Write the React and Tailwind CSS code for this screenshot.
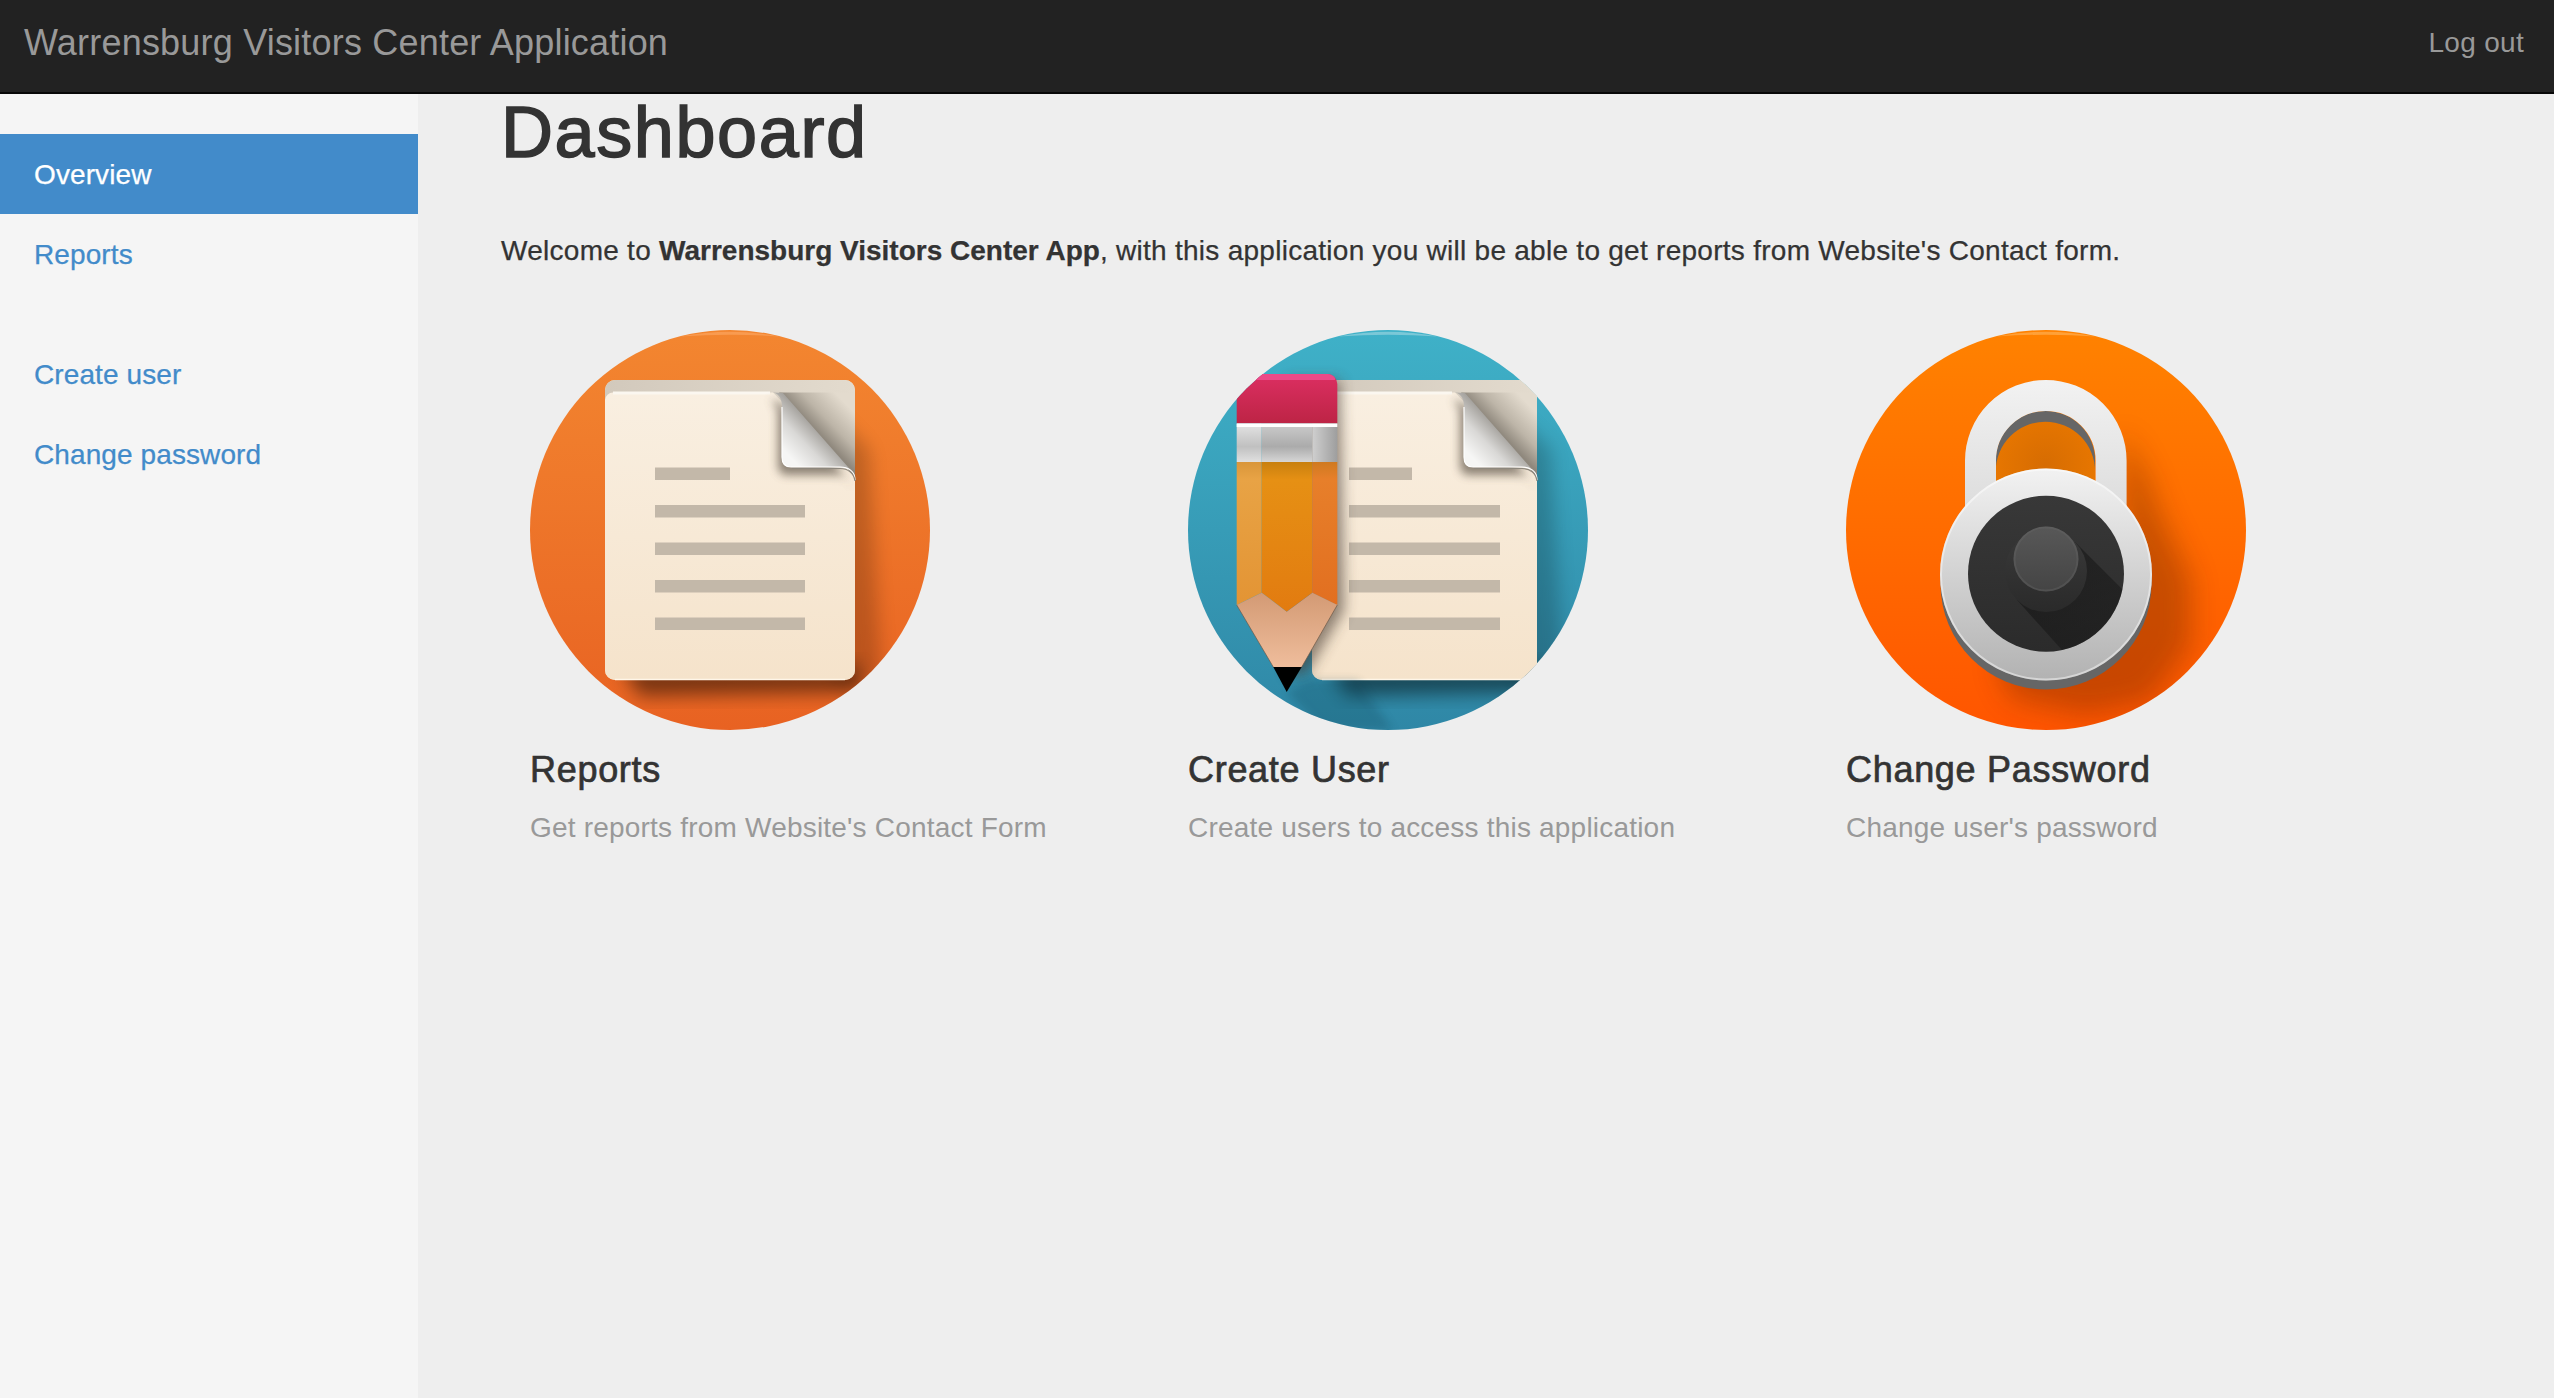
const F = "font-['Liberation_Sans',Arial,sans-serif]";

function Blur({ id, d }) {
  return (
    <filter id={id} x="-40%" y="-40%" width="180%" height="180%">
      <feGaussianBlur stdDeviation={d} />
    </filter>
  );
}

function Doc({ id, left, right, lineX, lineW, shortW }) {
  const dx = right - 325;
  const lines = [175, 212.5, 250, 287.5];
  const curl = `M${243 + dx} 62.5C${250 + dx} 64 ${252 + dx} 70 ${252 + dx} 77V127C${252 + dx} 133 ${255 + dx} 137 ${261 + dx} 137H${310 + dx}C${318 + dx} 137 ${325 + dx} 141 ${325 + dx} 150V145L${253 + dx} 63z`;
  return (
    <g>
      <defs>
        <linearGradient id={id + "page"} x1="0" y1="0" x2="0" y2="1">
          <stop offset="0" stopColor="#f9efe1" />
          <stop offset="1" stopColor="#f5e3cb" />
        </linearGradient>
        <linearGradient id={id + "strip"} x1="0" y1="0" x2="1" y2="0">
          <stop offset="0" stopColor="#d2c9bc" />
          <stop offset="1" stopColor="#e3dbce" />
        </linearGradient>
        <linearGradient id={id + "back"} gradientUnits="userSpaceOnUse" x1={289 + dx} y1="104" x2={318 + dx} y2="76">
          <stop offset="0" stopColor="#8f887d" />
          <stop offset="0.4" stopColor="#bdb5a8" />
          <stop offset="1" stopColor="#e3dbce" />
        </linearGradient>
        <linearGradient id={id + "curl"} gradientUnits="userSpaceOnUse" x1={263 + dx} y1="130" x2={292 + dx} y2="102">
          <stop offset="0" stopColor="#f6f6f5" />
          <stop offset="0.5" stopColor="#d9d8d6" />
          <stop offset="1" stopColor="#a19e99" />
        </linearGradient>
        <Blur id={id + "b8"} d="9" />
        <Blur id={id + "b5"} d="5" />
        <clipPath id={id + "pg"}>
          <rect x={left} y="50" width={right - left} height="300" rx="10" />
        </clipPath>
      </defs>
      <polygon points={`${right - 20},85 ${right + 14},120 ${right + 26},350 ${right - 20},350`} fill="#000" opacity="0.2" filter={`url(#${id}b8)`} />
      <polygon points={`${left + 15},335 ${right + 2},335 ${right + 10},362 ${left + 35},366`} fill="#000" opacity="0.48" filter={`url(#${id}b8)`} />
      <rect x={left} y="50" width={right - left} height="300" rx="10" fill="#f4e3cd" />
      <rect x={left} y="50" width={right - left} height="50" rx="10" fill={`url(#${id}strip)`} />
      <path d={`M${left + 8} 62.5H${243 + dx}L${325 + dx} 145V340a10 10 0 0 1-10 10H${left + 10}a10 10 0 0 1-10-10V70a8 8 0 0 1 8-7.5z`} fill={`url(#${id}page)`} />
      <path d={`M${left + 8} 63H${240 + dx}`} stroke="#fbf7f0" strokeWidth="3" fill="none" />
      <path d={`M${left + 10} 349.5H${right - 10}`} stroke="#fff6e8" strokeWidth="1.5" />
      <g clipPath={`url(#${id}pg)`}>
        <path d={curl} transform="translate(-4 8)" fill="#5f5548" opacity="0.7" filter={`url(#${id}b5)`} />
      </g>
      <polygon points={`${249 + dx},62.5 ${right},62.5 ${right},147`} fill={`url(#${id}back)`} />
      <path d={curl} fill={`url(#${id}curl)`} />
      <path d={`M${252 + dx} 77V127C${252 + dx} 133 ${255 + dx} 137 ${261 + dx} 137H${310 + dx}C${318 + dx} 137 ${325 + dx} 141 ${325 + dx} 150`} fill="none" stroke="#ffffff" strokeWidth="1.2" />
      <path d={`M${262 + dx} 138.5H${310 + dx}C${318 + dx} 138.5 ${324 + dx} 143 ${325 + dx} 151`} fill="none" stroke="#8d877d" strokeWidth="1.2" />
      <rect x={lineX} y="137.5" width={shortW} height="12.5" fill="#c3b8a9" />
      {lines.map((y) => (
        <rect key={y} x={lineX} y={y} width={lineW} height="12.5" fill="#c3b8a9" />
      ))}
    </g>
  );
}

function CircleBase({ id, from, to, rim, children }) {
  return (
    <svg width="400" height="400" viewBox="0 0 400 400" className="block">
      <defs>
        <linearGradient id={id + "bg"} x1="0" y1="0" x2="0" y2="1">
          <stop offset="0" stopColor={from} />
          <stop offset="1" stopColor={to} />
        </linearGradient>
        <clipPath id={id + "clip"}>
          <circle cx="200" cy="200" r="200" />
        </clipPath>
      </defs>
      <circle cx="200" cy="200" r="200" fill={`url(#${id}bg)`} />
      <path d="M150 6.5Q200 -3 250 6.5Q200 3 150 6.5z" fill={rim} opacity="0.5" />
      <g clipPath={`url(#${id}clip)`}>{children}</g>
    </svg>
  );
}

function ReportsIcon() {
  return (
    <CircleBase id="a" from="#f38630" to="#e86222" rim="#ffb070">
      <Doc id="a" left={75} right={325} lineX={125} lineW={150} shortW={75} />
    </CircleBase>
  );
}

function CreateIcon() {
  return (
    <CircleBase id="b" from="#3fb1c8" to="#2f87a6" rim="#b5e0e8">
      <Doc id="b" left={124} right={349} lineX={161} lineW={151} shortW={63} />
      <defs>
        <linearGradient id="ber" x1="0" y1="0" x2="0" y2="1">
          <stop offset="0" stopColor="#dc2f62" />
          <stop offset="1" stopColor="#bd2445" />
        </linearGradient>
        <linearGradient id="bwood" x1="0" y1="0" x2="0" y2="1">
          <stop offset="0" stopColor="#d39a74" />
          <stop offset="1" stopColor="#efbd9c" />
        </linearGradient>
        <linearGradient id="bf1" x1="0" y1="0" x2="0" y2="1">
          <stop offset="0" stopColor="#e4e4e4" />
          <stop offset="0.6" stopColor="#c0c0c0" />
          <stop offset="1" stopColor="#e0e0e0" />
        </linearGradient>
        <linearGradient id="bf2" x1="0" y1="0" x2="0" y2="1">
          <stop offset="0" stopColor="#cccccc" />
          <stop offset="0.6" stopColor="#ababab" />
          <stop offset="1" stopColor="#d6d6d6" />
        </linearGradient>
        <linearGradient id="bf3" x1="0" y1="0" x2="1" y2="0">
          <stop offset="0" stopColor="#cfcfcf" />
          <stop offset="1" stopColor="#9e9e9e" />
        </linearGradient>
        <linearGradient id="bo1" x1="0" y1="0" x2="0" y2="1">
          <stop offset="0" stopColor="#d9963a" />
          <stop offset="0.12" stopColor="#e8a345" />
          <stop offset="1" stopColor="#e39434" />
        </linearGradient>
        <linearGradient id="bo2" x1="0" y1="0" x2="0" y2="1">
          <stop offset="0" stopColor="#c8800f" />
          <stop offset="0.12" stopColor="#e69014" />
          <stop offset="1" stopColor="#e27b10" />
        </linearGradient>
        <linearGradient id="bo3" x1="0" y1="0" x2="0" y2="1">
          <stop offset="0" stopColor="#cf7a20" />
          <stop offset="0.12" stopColor="#e77f2a" />
          <stop offset="1" stopColor="#e26f20" />
        </linearGradient>
        <clipPath id="bpage">
          <rect x="124" y="50" width="225" height="300" rx="10" />
        </clipPath>
        <Blur id="bb6" d="7" />
        <Blur id="bb4" d="4" />
      </defs>
      <g clipPath="url(#bpage)">
        <polygon points="100,50 152,50 156,280 118,345 100,345" fill="#463b30" opacity="0.6" filter="url(#bb6)" />
      </g>
      <polygon points="98,362 122,350 170,350 205,400 135,400" fill="#0b3a4c" opacity="0.22" filter="url(#bb4)" />
      <path d="M48.7 44H139.3A10 10 0 0 1 149.3 54V93.5H48.7z" fill="url(#ber)" />
      <path d="M48.7 44H139.3A10 10 0 0 1 147 48L147 50H48.7z" fill="#ec4a88" />
      <rect x="48.7" y="93.5" width="25" height="38.5" fill="url(#bf1)" />
      <rect x="73.7" y="93.5" width="50.6" height="38.5" fill="url(#bf2)" />
      <rect x="124.3" y="93.5" width="25" height="38.5" fill="url(#bf3)" />
      <rect x="48.7" y="93.5" width="100.6" height="3.5" fill="#ffffff" />
      <polygon points="48.7,132 73.7,132 73.7,262.7 48.7,275" fill="url(#bo1)" />
      <polygon points="73.7,132 124.3,132 124.3,262.7 98.7,281.7 73.7,262.7" fill="url(#bo2)" />
      <polygon points="124.3,132 149.3,132 149.3,275 124.3,262.7" fill="url(#bo3)" />
      <polygon points="48.7,275 73.7,262.7 98.7,281.7 124.3,262.7 149.3,275 113.7,337 85.3,337" fill="url(#bwood)" />
      <polygon points="85.3,337 113.7,337 98.7,362" fill="#000" />
      <path d="M48.7 275L85.3 337M149.3 275L113.7 337" stroke="#6d5a48" strokeWidth="1" fill="none" opacity="0.7" />
    </CircleBase>
  );
}

function LockIcon() {
  return (
    <CircleBase id="c" from="#ff8200" to="#ff5500" rim="#ffc070">
      <defs>
        <linearGradient id="cshk" gradientUnits="userSpaceOnUse" x1="0" y1="50" x2="0" y2="230">
          <stop offset="0" stopColor="#f2f2f2" />
          <stop offset="1" stopColor="#d4d4d4" />
        </linearGradient>
        <linearGradient id="cface" x1="0" y1="0" x2="0" y2="1">
          <stop offset="0" stopColor="#f2f2f2" />
          <stop offset="1" stopColor="#b2b2b2" />
        </linearGradient>
        <linearGradient id="cin" x1="0" y1="0" x2="0" y2="1">
          <stop offset="0" stopColor="#383838" />
          <stop offset="1" stopColor="#2b2b2b" />
        </linearGradient>
        <linearGradient id="cks" x1="0" y1="0" x2="1" y2="1">
          <stop offset="0.25" stopColor="#111" stopOpacity="0.5" />
          <stop offset="1" stopColor="#111" stopOpacity="0.25" />
        </linearGradient>
        <linearGradient id="cknb" x1="0" y1="0" x2="0" y2="1">
          <stop offset="0" stopColor="#3a3a3a" />
          <stop offset="1" stopColor="#2a2a2a" />
        </linearGradient>
        <linearGradient id="cktop" x1="0" y1="0" x2="0" y2="1">
          <stop offset="0" stopColor="#585858" />
          <stop offset="1" stopColor="#444444" />
        </linearGradient>
        <radialGradient id="chol" cx="0.5" cy="0.55" r="0.6">
          <stop offset="0" stopColor="#d66c02" />
          <stop offset="1" stopColor="#ea7800" />
        </radialGradient>
        <clipPath id="cinclip">
          <circle cx="200" cy="243.7" r="78" />
        </clipPath>
        <Blur id="cb" d="14" />
      </defs>
      <polygon points="275,100 300,145 312,180 345,250 345,315 305,372 240,385 165,368 150,330 280,230" fill="#6e2800" opacity="0.38" filter="url(#cb)" />
      <path d="M149.7 180V130.7a49.7 49.7 0 0 1 99.4 0V180z" fill="url(#chol)" />
      <path d="M149.7 141.4V130.7a49.7 49.7 0 0 1 99.4 0V141.4a49.7 49.7 0 0 0-99.4 0z" fill="#666666" />
      <path d="M134.5 230V130.7a65.3 65.3 0 0 1 130.6 0V230" fill="none" stroke="url(#cshk)" strokeWidth="31" />
      <circle cx="200" cy="254" r="105.5" fill="#666666" />
      <circle cx="200" cy="244.5" r="106" fill="url(#cface)" />
      <circle cx="200" cy="244.5" r="105" fill="none" stroke="#ffffff" strokeOpacity="0.45" strokeWidth="2" />
      <circle cx="200" cy="243.7" r="78" fill="url(#cin)" />
      <g clipPath="url(#cinclip)">
        <polygon points="229,212 330,313 270,380 171,270" fill="url(#cks)" />
      </g>
      <circle cx="200" cy="241" r="41" fill="url(#cknb)" />
      <circle cx="200" cy="229" r="32.5" fill="url(#cktop)" />
      <circle cx="200" cy="229" r="31.5" fill="none" stroke="#666666" strokeOpacity="0.35" strokeWidth="2" />
    </CircleBase>
  );
}

const side = "block h-[80px] leading-[81px] pl-[34px] text-[28px] tracking-[0.1px] text-[#428bca] [-webkit-text-stroke:0.25px]";
const cards = [
  { t: "Reports", d: "Get reports from Website's Contact Form", I: ReportsIcon },
  { t: "Create User", d: "Create users to access this application", I: CreateIcon },
  { t: "Change Password", d: "Change user's password", I: LockIcon },
];

export default function App() {
  return (
    <div className={`${F} flex h-[1398px] flex-col overflow-hidden bg-[#eeeeee] text-[28px] text-[#333333]`}>
      <header className="flex h-[94px] shrink-0 items-start justify-between border-b-2 border-[#080808] bg-[#222222] pl-[24px] pr-[30px] text-[#999999]">
        <a className="text-[36px] leading-[85px] tracking-[0.2px]">Warrensburg Visitors Center Application</a>
        <a className="text-[28px] leading-[85px] tracking-[0.3px]">Log out</a>
      </header>
      <div className="flex min-h-0 flex-1">
        <aside className="w-[418px] shrink-0 bg-[#f5f5f5] pt-[40px]">
          <a className={`${side} !text-white bg-[#428bca]`}>Overview</a>
          <a className={side}>Reports</a>
          <a className={`${side} mt-[40px]`}>Create user</a>
          <a className={side}>Change password</a>
        </aside>
        <main className="flex-1 pl-[83px] pr-[79px]">
          <h1 className="-mt-[2px] text-[72px] leading-[80px] font-normal tracking-[1.6px] [-webkit-text-stroke:1.6px_#333333]">Dashboard</h1>
          <p className="mt-[58px] h-[40px] text-[28px] leading-[41px] tracking-[0.27px] text-[#333333] [-webkit-text-stroke:0.25px]">
            Welcome to <b className="tracking-[0px]">Warrensburg Visitors Center App</b>, with this application you will be able to get reports from Website's Contact form.
          </p>
          <div className="mt-[60px] grid grid-cols-3">
            {cards.map(({ t, d, I }) => (
              <div key={t} className="pl-[29px]">
                <I />
                <h4 className="mt-[20px] text-[36px] leading-[40px] font-normal tracking-[0.7px] [-webkit-text-stroke:0.7px_#333333]">{t}</h4>
                <p className="mt-[18px] text-[28px] leading-[40px] tracking-[0.2px] text-[#999999]">{d}</p>
              </div>
            ))}
          </div>
        </main>
      </div>
    </div>
  );
}
